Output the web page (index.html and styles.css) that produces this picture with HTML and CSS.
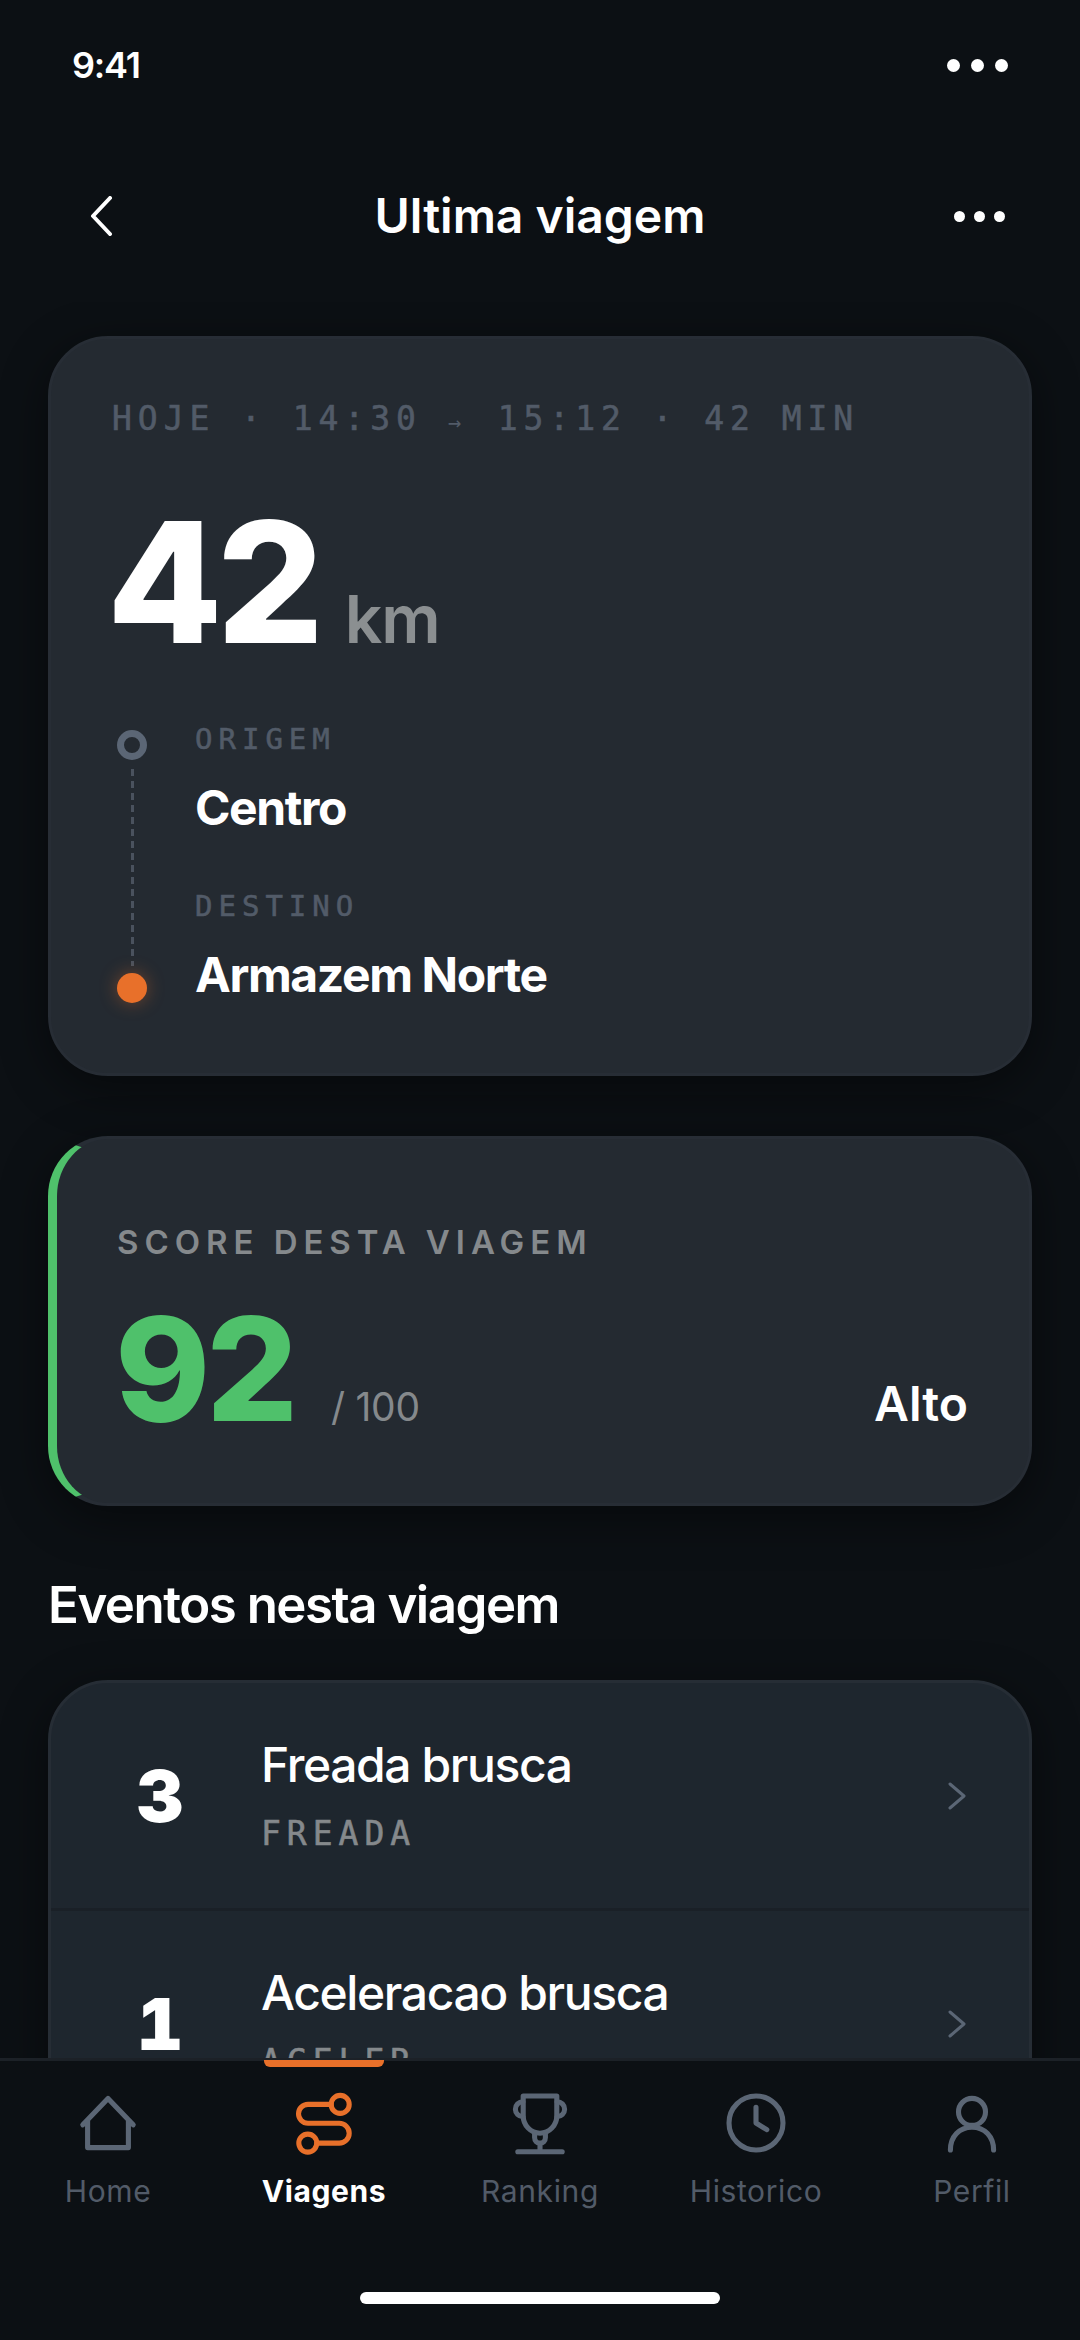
FILE: index.html
```html
<!DOCTYPE html>
<html>
	<head>
		<title>Ultima viagem</title>
		<link rel="stylesheet" href="styles.css">
	</head>
	<body>
		<div class="screen">
			<div class="status">
				<span class="time">9:41</span>
				<span class="dots status-dots"><i></i><i></i><i></i></span>
			</div>

			<header class="header">
				<svg class="back" viewBox="0 0 24 40" fill="none"><path d="M21 2 L4 20 L21 38" /></svg>
				<h1 class="title">Ultima viagem</h1>
				<span class="dots header-dots"><i></i><i></i><i></i></span>
			</header>

			<main class="content">
				<section class="card trip">
					<div class="mono-line">HOJE · 14:30 <span class="arrow">→</span> 15:12 · 42 MIN</div>
					<div class="distance">
						<span class="distance-value">42</span>
						<span class="distance-unit">km</span>
					</div>
					<div class="route">
						<div class="rail">
							<span class="stop-ring"></span>
							<span class="rail-line"></span>
							<span class="stop-dot"></span>
						</div>
						<div class="stops">
							<div class="stop">
								<div class="stop-label">ORIGEM</div>
								<div class="stop-name">Centro</div>
							</div>
							<div class="stop">
								<div class="stop-label">DESTINO</div>
								<div class="stop-name">Armazem Norte</div>
							</div>
						</div>
					</div>
				</section>

				<section class="card score">
					<div class="score-label">SCORE DESTA VIAGEM</div>
					<div class="score-row">
						<span class="score-value">92</span>
						<span class="score-max">/ 100</span>
						<span class="score-level">Alto</span>
					</div>
				</section>

				<h2 class="section-title">Eventos nesta viagem</h2>

				<section class="events">
					<div class="event">
						<span class="event-count">3</span>
						<div class="event-text">
							<div class="event-name">Freada brusca</div>
							<div class="event-type">FREADA</div>
						</div>
						<svg class="chevron" viewBox="0 0 18 28" fill="none"><path d="M2 2 L16 14 L2 26" /></svg>
					</div>
					<div class="event">
						<span class="event-count">1</span>
						<div class="event-text">
							<div class="event-name">Aceleracao brusca</div>
							<div class="event-type">ACELER</div>
						</div>
						<svg class="chevron" viewBox="0 0 18 28" fill="none"><path d="M2 2 L16 14 L2 26" /></svg>
					</div>
				</section>
			</main>

			<nav class="nav">
				<div class="tabs">
					<a class="tab">
						<svg class="tab-icon" viewBox="0 0 24 24" fill="none"><path d="M3.6 12.6 L12 3.8 L20.4 12.6 M5.2 11 V20.2 H18.8 V11" /></svg>
						<span>Home</span>
					</a>
					<a class="tab active">
						<svg class="tab-icon" viewBox="0 0 24 24" fill="none">
							<circle cx="17.4" cy="5.8" r="3" />
							<circle cx="6.6" cy="18.7" r="3" />
							<path d="M14.4 5.8 H6.65 a3.15 3.15 0 0 0 0 6.3 H17.1 a3.3 3.3 0 0 1 0 6.6 H9.6" />
						</svg>
						<span>Viagens</span>
					</a>
					<a class="tab">
						<svg class="tab-icon" viewBox="0 0 24 24" fill="none">
							<path d="M6.4 3 H17.6 V9.6 a5.6 5.8 0 0 1 -11.2 0 Z" />
							<path d="M6.3 4.9 a2.5 2.5 0 0 0 0 5 M17.7 4.9 a2.5 2.5 0 0 1 0 5" />
							<path d="M10.2 15.4 v1.4 c0 1.2 .8 1.9 1.8 1.9 s1.8 -.7 1.8 -1.9 v-1.4 M12 18.7 v2.9 M4.6 21.6 H19.4" />
						</svg>
						<span>Ranking</span>
					</a>
					<a class="tab">
						<svg class="tab-icon" viewBox="0 0 24 24" fill="none">
							<circle cx="12" cy="12" r="9" />
							<path d="M12 6.8 V12 L15.6 14.2" />
						</svg>
						<span>Historico</span>
					</a>
					<a class="tab">
						<svg class="tab-icon" viewBox="0 0 24 24" fill="none">
							<circle cx="12" cy="8.3" r="4.5" />
							<path d="M4.8 21 c0 -4.5 3 -7.6 7.2 -7.6 s7.2 3.1 7.2 7.6" />
						</svg>
						<span>Perfil</span>
					</a>
				</div>
				<div class="home-bar"></div>
			</nav>
		</div>
	</body>
</html>
```

FILE: styles.css
```css
* {
	box-sizing: border-box;
}

body {
	margin: 0;
	background: #0c1014;
	color: #fff;
	font-family: Inter, "Noto Sans", sans-serif;
}

.screen {
	width: 1080px;
	height: 2340px;
	display: flex;
	flex-direction: column;
	overflow: hidden;
}

.status {
	height: 130px;
	flex: none;
	display: flex;
	align-items: center;
	justify-content: space-between;
	padding: 0 72px;
}
.time {
	font-size: 36px;
	font-weight: 600;
	letter-spacing: -1.2px;
}

.dots {
	display: flex;
}
.dots > i {
	display: block;
	border-radius: 50%;
	background: #fff;
}
.status-dots {
	gap: 11px;
}
.status-dots > i {
	width: 13px;
	height: 13px;
}
.header-dots {
	justify-self: end;
	gap: 9px;
	margin-right: 3px;
}
.header-dots > i {
	width: 11px;
	height: 11px;
}

.header {
	height: 172px;
	flex: none;
	display: grid;
	grid-template-columns: 1fr auto 1fr;
	align-items: center;
	padding: 0 72px;
}
.back {
	width: 26px;
	height: 40px;
	margin-left: 16px;
}
.back > path {
	stroke: #fff;
	stroke-width: 4;
	stroke-linecap: round;
	stroke-linejoin: round;
}
.title {
	margin: 0;
	font-size: 48px;
	line-height: 60px;
	font-weight: 600;
}

.content {
	flex: 1;
	min-height: 0;
	overflow: hidden;
	padding: 34px 48px 0;
}

.card {
	background: #242a31;
	border: 3px solid #272d35;
	border-radius: 60px;
	box-shadow: 0 12px 48px rgba(0, 0, 0, 0.45);
}

.trip {
	height: 740px;
	padding: 60px 61px 0;
}
.mono-line {
	font-family: "DejaVu Sans Mono", monospace;
	font-size: 33px;
	line-height: 40px;
	letter-spacing: 5.95px;
	color: #525b68;
	-webkit-text-stroke: 0.6px #525b68;
	white-space: nowrap;
}
.arrow {
	font-size: 22px;
	letter-spacing: 11px;
	-webkit-text-stroke: 0;
}

.distance {
	display: flex;
	align-items: baseline;
	gap: 27px;
	margin-top: 55px;
	margin-left: -5px;
}
.distance-value {
	font-size: 168px;
	line-height: 168px;
	font-weight: 800;
	letter-spacing: -6px;
}
.distance-unit {
	font-size: 66px;
	font-weight: 600;
	letter-spacing: -1px;
	color: #8b8f91;
}

.route {
	display: flex;
	gap: 48px;
	margin-top: 55px;
	margin-left: 5px;
}
.rail {
	width: 30px;
	display: flex;
	flex-direction: column;
	align-items: center;
	padding: 9px 0 2px;
}
.stop-ring {
	width: 30px;
	height: 30px;
	flex: none;
	border: 7px solid #5b6675;
	border-radius: 50%;
}
.rail-line {
	flex: 1;
	width: 3px;
	margin: 9px 0 7px;
	background: repeating-linear-gradient(to bottom, #4a525e 0 7px, transparent 7px 12px);
}
.stop-dot {
	width: 30px;
	height: 30px;
	flex: none;
	border-radius: 50%;
	background: #e8702a;
	box-shadow: 0 0 18px rgba(232, 112, 42, 0.4);
}

.stops {
	display: flex;
	flex-direction: column;
	gap: 50px;
}
.stop-label {
	font-family: "DejaVu Sans Mono", monospace;
	font-size: 29px;
	line-height: 36px;
	letter-spacing: 6px;
	color: #525b68;
	-webkit-text-stroke: 0.6px #525b68;
}
.stop-name {
	margin-top: 21px;
	font-size: 48px;
	line-height: 60px;
	font-weight: 700;
	letter-spacing: -1.4px;
}

.score {
	height: 370px;
	margin-top: 60px;
	padding: 83px 61px 0 60px;
	border-left: 9px solid #4fc16b;
}
.score-label {
	font-size: 33px;
	line-height: 40px;
	font-weight: 600;
	letter-spacing: 5.95px;
	color: #85898c;
}
.score-row {
	display: flex;
	align-items: baseline;
	margin-top: 35px;
}
.score-value {
	margin-left: -2px;
	font-size: 144px;
	line-height: 144px;
	font-weight: 800;
	letter-spacing: -4px;
	color: #4fc16b;
}
.score-max {
	flex: 1;
	margin-left: 37px;
	font-size: 39px;
	letter-spacing: -0.3px;
	color: #85898c;
}
.score-level {
	font-size: 48px;
	font-weight: 600;
}

.section-title {
	margin: 67px 0 43px;
	font-size: 51px;
	line-height: 64px;
	font-weight: 600;
	letter-spacing: -1.5px;
}

.events {
	background: #1e262e;
	border: 3px solid #262d35;
	border-radius: 60px;
	box-shadow: 0 12px 48px rgba(0, 0, 0, 0.45);
}
.event {
	height: 225px;
	display: flex;
	align-items: center;
	padding-right: 63px;
}
.event + .event {
	height: 228px;
	border-top: 3px solid #1a2027;
}
.event-count {
	width: 150px;
	margin-left: 34px;
	flex: none;
	text-align: center;
	font-size: 72px;
	font-weight: 900;
	font-feature-settings: "tnum";
}
.event-text {
	flex: 1;
	margin-left: 26px;
	padding-bottom: 3px;
}
.event-name {
	font-size: 48px;
	line-height: 60px;
	font-weight: 550;
	letter-spacing: -1.4px;
}
.event-type {
	margin-top: 19px;
	font-family: "DejaVu Sans Mono", monospace;
	font-size: 33px;
	line-height: 40px;
	letter-spacing: 6px;
	color: #85898c;
	-webkit-text-stroke: 0.6px #85898c;
}
.chevron {
	width: 18px;
	height: 28px;
	flex: none;
}
.chevron > path {
	stroke: #5b6675;
	stroke-width: 3;
	stroke-linecap: round;
	stroke-linejoin: round;
}

.nav {
	height: 282px;
	flex: none;
	border-top: 3px solid #1c2127;
	background: #0c1014;
}
.tabs {
	display: grid;
	grid-template-columns: repeat(5, 1fr);
}
.tab {
	position: relative;
	display: flex;
	flex-direction: column;
	align-items: center;
	gap: 12px;
	padding-top: 26px;
	font-size: 30px;
	line-height: 40px;
	letter-spacing: 0.6px;
	color: #525b68;
}
.tab-icon {
	width: 72px;
	height: 72px;
}
.tab-icon * {
	stroke: #5b6675;
	stroke-width: 1.7;
	stroke-linecap: round;
	stroke-linejoin: round;
}
.tab.active {
	color: #fff;
	font-weight: 700;
}
.tab.active .tab-icon * {
	stroke: #e8702a;
}
.tab.active::before {
	content: "";
	position: absolute;
	top: -1px;
	left: 48px;
	width: 120px;
	height: 7px;
	border-radius: 0 0 6px 6px;
	background: #e8702a;
}

.home-bar {
	width: 360px;
	height: 12px;
	margin: 81px auto 0;
	border-radius: 6px;
	background: #fff;
}
```
